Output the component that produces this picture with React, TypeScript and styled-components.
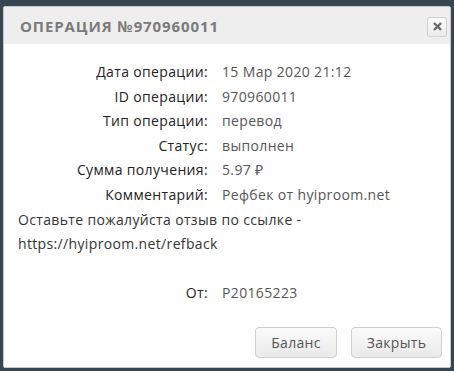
import { Fragment } from 'react'
import styled, { createGlobalStyle } from 'styled-components'

const GlobalStyle = createGlobalStyle`
  html, body {
    margin: 0;
    padding: 0;
    background: #37464f;
    height: 100%;
  }
  body {
    font-family: 'Open Sans', 'Liberation Sans', sans-serif;
  }
`

const Page = styled.div`
  width: 454px;
  height: 371px;
  padding: 6px 3px 3px 3px;
  box-sizing: border-box;
`

const Dialog = styled.div`
  background: #fff;
  border: 1px solid #c8c8c8;
  border-radius: 2px;
  height: 362px;
  box-sizing: border-box;
  display: flex;
  flex-direction: column;
  overflow: hidden;
`

const Header = styled.div`
  display: flex;
  align-items: center;
  justify-content: space-between;
  height: 37px;
  padding: 0 3px 0 16px;
  background: #eeeeee;
  flex-shrink: 0;
`

const Title = styled.h2`
  margin: 0;
  font-size: 15px;
  font-weight: 700;
  letter-spacing: 0.9px;
  color: #7a7a7a;
  text-transform: uppercase;
`

const CloseButton = styled.button`
  width: 20px;
  height: 20px;
  padding: 0;
  margin-top: 2px;
  border: 1px solid #d0d0d0;
  border-radius: 3px;
  background: linear-gradient(#fafafa, #ececec);
  display: flex;
  align-items: center;
  justify-content: center;
  cursor: pointer;
`

const Body = styled.div`
  padding: 16px 14px 0 14px;
  font-size: 14px;
  letter-spacing: 0.35px;
  line-height: 24.6px;
  flex: 1;
`

const Rows = styled.div`
  display: grid;
  grid-template-columns: 190px 1fr;
  column-gap: 14px;
`

const Label = styled.span`
  text-align: right;
  color: #222;
`

const Value = styled.span`
  color: #555;
`

const Note = styled.p`
  margin: 0;
  color: #333;
`

const Spacer = styled.div`
  height: 24.6px;
`

const Footer = styled.div`
  display: flex;
  justify-content: flex-end;
  gap: 14px;
  padding: 0 8px 9px 0;
`

const Button = styled.button<{ $w: number }>`
  width: ${(p) => p.$w}px;
  height: 31px;
  border: 1px solid #cfcfcf;
  border-radius: 4px;
  background: linear-gradient(#fbfbfb, #e9e9e9);
  font-family: 'Open Sans', 'Liberation Sans', sans-serif;
  font-size: 14px;
  letter-spacing: 0.3px;
  color: #555;
  cursor: pointer;
`

const rows: [string, string][] = [
  ['Дата операции:', '15 Мар 2020 21:12'],
  ['ID операции:', '970960011'],
  ['Тип операции:', 'перевод'],
  ['Статус:', 'выполнен'],
  ['Сумма получения:', '5.97 ₽'],
  ['Комментарий:', 'Рефбек от hyiproom.net'],
]

export default function App() {
  return (
    <>
      <GlobalStyle />
      <Page>
        <Dialog>
          <Header>
            <Title>Операция №970960011</Title>
            <CloseButton aria-label="close">
              <svg width="9" height="9" viewBox="0 0 10 10">
                <path d="M2 2 L8 8 M8 2 L2 8" stroke="#6b6b6b" strokeWidth="2.6" strokeLinecap="square" />
              </svg>
            </CloseButton>
          </Header>
          <Body>
            <Rows>
              {rows.map(([l, v]) => (
                <Fragment key={l}>
                  <Label>{l}</Label>
                  <Value>{v}</Value>
                </Fragment>
              ))}
            </Rows>
            <Note>Оставьте пожалуйста отзыв по ссылке -</Note>
            <Note>https://hyiproom.net/refback</Note>
            <Spacer />
            <Rows>
              <Label>От:</Label>
              <Value>P20165223</Value>
            </Rows>
          </Body>
          <Footer>
            <Button $w={82}>Баланс</Button>
            <Button $w={91}>Закрыть</Button>
          </Footer>
        </Dialog>
      </Page>
    </>
  )
}
